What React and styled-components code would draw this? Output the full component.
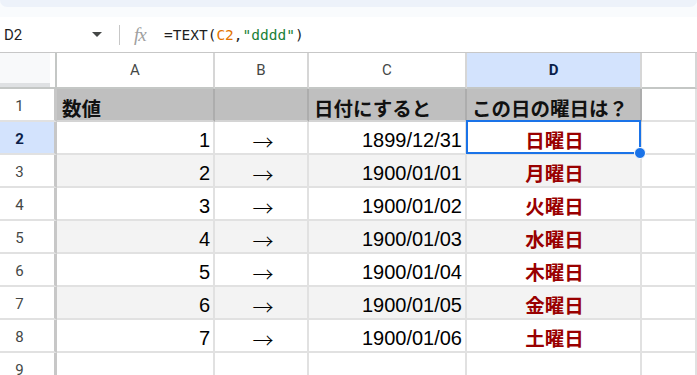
import styled, { createGlobalStyle } from "styled-components";

const GlobalStyle = createGlobalStyle`
    html, body {
        margin: 0;
        padding: 0;
        background: #ffffff;
        overflow: hidden;
    }
    body {
        font-family: "Liberation Sans", Arial, "Noto Sans CJK JP", sans-serif;
    }
`;

const COLUMNS = ["A", "B", "C", "D"];

const rows = [
    { n: 2, value: 1, date: "1899/12/31", day: "日曜日" },
    { n: 3, value: 2, date: "1900/01/01", day: "月曜日" },
    { n: 4, value: 3, date: "1900/01/02", day: "火曜日" },
    { n: 5, value: 4, date: "1900/01/03", day: "水曜日" },
    { n: 6, value: 5, date: "1900/01/04", day: "木曜日" },
    { n: 7, value: 6, date: "1900/01/05", day: "金曜日" },
    { n: 8, value: 7, date: "1900/01/06", day: "土曜日" },
];

export default function App() {
    return (
        <Page>
            <GlobalStyle />
            <Chrome>
                <Toolbar />
            </Chrome>
            <FormulaBar>
                <NameBox>
                    <span>D2</span>
                    <Caret />
                </NameBox>
                <Divider />
                <Fx>fx</Fx>
                <Formula>
                    =TEXT(<Ref>C2</Ref>,<Str>"dddd"</Str>)
                </Formula>
            </FormulaBar>

            <Grid>
                <Corner>
                    <Frozen />
                </Corner>
                {COLUMNS.map((c) => (
                    <ColHeader key={c} active={c === "D"}>{c}</ColHeader>
                ))}
                <ColHeader />

                <RowHeader>1</RowHeader>
                <TitleCell>数値</TitleCell>
                <TitleCell />
                <TitleCell>日付にすると</TitleCell>
                <TitleCell>この日の曜日は？</TitleCell>
                <Cell />

                {rows.map((r) => {
                    const striped = r.n % 2 === 1;
                    const selected = r.n === 2;
                    return [
                        <RowHeader key={`h${r.n}`} active={selected}>{r.n}</RowHeader>,
                        <Cell key={`a${r.n}`} striped={striped} align="right">{r.value}</Cell>,
                        <ArrowCell key={`b${r.n}`} striped={striped}>→</ArrowCell>,
                        <Cell key={`c${r.n}`} striped={striped} align="right">{r.date}</Cell>,
                        <DayCell key={`d${r.n}`} striped={striped}>
                            {r.day}
                            {selected && (
                                <Selection>
                                    <Handle />
                                </Selection>
                            )}
                        </DayCell>,
                        <Cell key={`e${r.n}`} />,
                    ];
                })}

                <RowHeader>9</RowHeader>
                <Cell />
                <Cell />
                <Cell />
                <Cell />
                <Cell />
            </Grid>
        </Page>
    );
}

const Page = styled.div`
    width: 697px;
    height: 375px;
    overflow: hidden;
    background: #ffffff;
`;

const Chrome = styled.div`
    height: 17px;
    background: #f9fbfd;
`;

const Toolbar = styled.div`
    height: 7px;
    background: #edf2fa;
    border-radius: 0 0 16px 16px;
`;

const FormulaBar = styled.div`
    height: 35px;
    display: flex;
    align-items: center;
    border-bottom: 1px solid #c7c7c7;
    background: #ffffff;
    color: #1f1f1f;
`;

const NameBox = styled.div`
    width: 106px;
    display: flex;
    align-items: center;
    justify-content: space-between;
    padding: 0 4px 0 4px;
    box-sizing: border-box;
    font-family: Roboto, "Liberation Sans", sans-serif;
    font-size: 15px;
`;

const Caret = styled.span`
    width: 0;
    height: 0;
    border-left: 5px solid transparent;
    border-right: 5px solid transparent;
    border-top: 5px solid #444746;
`;

const Divider = styled.div`
    width: 1px;
    height: 20px;
    background: #c7c7c7;
    margin: 0 14px 0 13px;
`;

const Fx = styled.span`
    font-family: "Liberation Serif", serif;
    font-style: italic;
    font-size: 19px;
    color: #a0a0a0;
    letter-spacing: -1px;
    width: 30px;
`;

const Formula = styled.span`
    font-family: "DejaVu Sans Mono", "Liberation Mono", monospace;
    font-size: 14.5px;
    color: #1f1f1f;
`;

const Ref = styled.span`
    color: #e37400;
`;

const Str = styled.span`
    color: #188038;
`;

const Grid = styled.div`
    display: grid;
    grid-template-columns: 57px 158px 94px 158px 175px 1fr;
    grid-template-rows: 36px repeat(9, 33px);
    font-size: 20px;
    color: #000000;
`;

const Corner = styled.div`
    border-bottom: 2px solid #c4c7c5;
    border-right: 2px solid #c4c7c5;
    background: #ffffff;
    display: flex;
`;

const Frozen = styled.div`
    width: 50px;
    height: 30px;
    background: #f8f9fa;
    border-bottom: 4px solid #dfe1e3;
`;

const ColHeader = styled.div`
    display: flex;
    align-items: center;
    justify-content: center;
    font-family: Roboto, "Liberation Sans", sans-serif;
    font-size: 15px;
    font-weight: ${({ active }) => (active ? 700 : 400)};
    color: ${({ active }) => (active ? "#0b1f4a" : "#444746")};
    background: ${({ active }) => (active ? "#d3e3fd" : "#ffffff")};
    border-right: 2px solid #d6d6d6;
    border-bottom: 2px solid #c4c7c5;
    box-sizing: border-box;
`;

const RowHeader = styled.div`
    display: flex;
    align-items: center;
    justify-content: center;
    padding: 3px 15px 0 0;
    font-family: Roboto, "Liberation Sans", sans-serif;
    font-size: 15px;
    font-weight: ${({ active }) => (active ? 700 : 400)};
    color: ${({ active }) => (active ? "#0b1f4a" : "#444746")};
    background: ${({ active }) => (active ? "#d3e3fd" : "#ffffff")};
    border-right: 3px solid #c7c7c7;
    border-bottom: 2px solid #e1e1e1;
    box-sizing: border-box;
`;

const Cell = styled.div`
    display: flex;
    align-items: flex-end;
    justify-content: ${({ align }) =>
        align === "right" ? "flex-end" : align === "center" ? "center" : "flex-start"};
    padding: 0 3px 1px 5px;
    background: ${({ striped }) => (striped ? "#f3f3f3" : "#ffffff")};
    border-right: 2px solid #e1e1e1;
    border-bottom: 2px solid #e1e1e1;
    box-sizing: border-box;
    white-space: nowrap;
    line-height: 1.15;
`;

const ArrowCell = styled(Cell)`
    justify-content: center;
    align-items: center;
    padding: 8px 0 0 4px;
    font-family: "Noto Sans CJK JP", sans-serif;
    font-weight: 300;
    font-size: 21px;
    line-height: 1;
`;

const TitleCell = styled(Cell)`
    background: #bfbfbf;
    border-right-color: #adadad;
    border-bottom-color: #d4d4d4;
    font-family: "Noto Sans CJK JP", sans-serif;
    font-weight: 700;
    font-size: 19.5px;
    line-height: 1.2;
    padding-left: 5px;
    color: #111111;
`;

const DayCell = styled(Cell)`
    position: relative;
    justify-content: center;
    font-family: "Noto Sans CJK JP", sans-serif;
    font-weight: 700;
    font-size: 19.5px;
    line-height: 1.25;
    color: #990000;
`;

const Selection = styled.div`
    position: absolute;
    z-index: 2;
    left: -1px;
    top: -2px;
    right: -1px;
    bottom: -1px;
    border: 2px solid #1a73e8;
    pointer-events: none;
`;

const Handle = styled.div`
    position: absolute;
    right: -7px;
    bottom: -7px;
    width: 10px;
    height: 10px;
    border-radius: 50%;
    background: #1a73e8;
    border: 1px solid #ffffff;
`;
